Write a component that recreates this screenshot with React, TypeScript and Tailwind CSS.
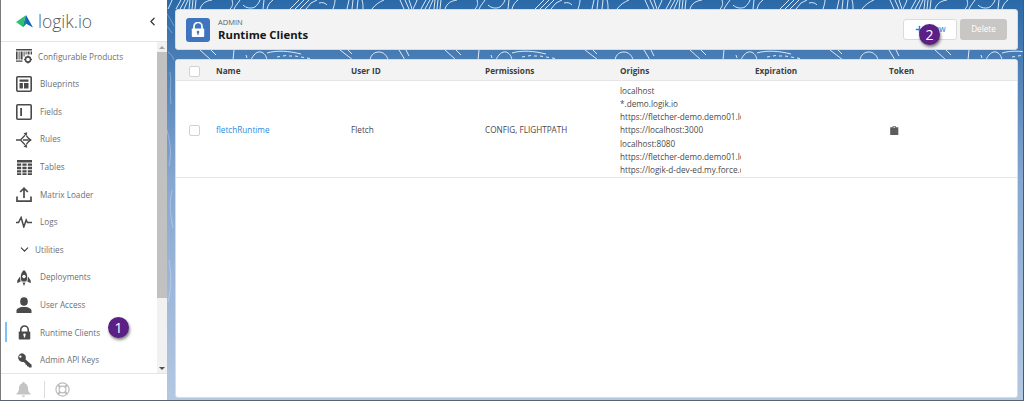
import { ChevronDown, ChevronLeft, Plus } from 'lucide-react';
import type { ReactNode } from 'react';

function ProductsIcon() {
  return (
    <svg viewBox="0 0 16 15" className="h-[15px] w-[16px]" fill="#4a4a4a">
      <path d="M0 0h16v1.4H0zM0 2.4h1.6v8H0zM2.6 2.4h1v8h-1zM4.6 2.4h2v8h-2zM7.6 2.4h1v5h-1zM9.6 2.4h1v3h-1zM11.6 2.4h2v3h-2zM14.6 2.4h1.4v3h-1.4zM0 11.4h6.5v1.4H0z" />
      <circle cx="12" cy="10.5" r="2.6" fill="none" stroke="#4a4a4a" strokeWidth="1.6" />
      <path d="M11.4 6.4h1.2v1.4h-1.2zM11.4 13.2h1.2v1.4h-1.2zM8 9.9h1.4v1.2H8zM14.6 9.9H16v1.2h-1.4z" />
    </svg>
  );
}

function BlueprintIcon() {
  return (
    <svg viewBox="0 0 16 16" className="h-4 w-4" fill="none">
      <rect x="0.8" y="0.8" width="14.4" height="14.4" rx="1" stroke="#4a4a4a" strokeWidth="1.6" />
      <path d="M3.5 3.5h9v2.2h-9zM3.5 7h3.4v5.5H3.5zM8 7h4.5v5.5H8z" fill="#4a4a4a" />
    </svg>
  );
}

function FieldsIcon() {
  return (
    <svg viewBox="0 0 16 16" className="h-4 w-4" fill="none">
      <rect x="0.8" y="0.8" width="14.4" height="14.4" rx="1" stroke="#4a4a4a" strokeWidth="1.6" />
      <path d="M4.2 4h1.8v8H4.2z" fill="#4a4a4a" />
    </svg>
  );
}

function RulesIcon() {
  return (
    <svg viewBox="0 0 16 16" className="h-4 w-4" fill="none" stroke="#4a4a4a" strokeWidth="1.3">
      <path d="M0 8h4.500M4.500 8 9 3.200M4.500 8 9 12.800M10.500 4 14 8l-3.500 4M7 8h5" />
      <path d="M7.500 1.300 11.200 0.300 10.600 4.200zM7.500 14.700l3.700 1-.6-3.900zM12.500 5.800 16 8l-3.500 2.200z" fill="#4a4a4a" stroke="none" />
    </svg>
  );
}

function TablesIcon() {
  return (
    <svg viewBox="0 0 15 15" className="h-[15px] w-[15px]" fill="#4a4a4a">
      <path d="M0 0h15v2.4H0zM0 3.4h4.2v2.4H0zM5.400 3.400h4.200v2.400H5.400zM10.800 3.400H15v2.400h-4.200zM0 6.800h4.200v2.400H0zM5.400 6.800h4.200v2.400H5.400zM10.800 6.800H15v2.400h-4.200zM0 10.200h4.200v2.200H0zM5.400 10.200h4.200v2.200H5.400zM10.800 10.200H15v2.200h-4.200zM0 13.300h4.200V15H0zM5.400 13.300h4.200V15H5.400zM10.800 13.300H15V15h-4.200z" />
    </svg>
  );
}

function UploadIcon() {
  return (
    <svg viewBox="0 0 16 15" className="h-[15px] w-4" fill="none" stroke="#4a4a4a" strokeWidth="1.7">
      <path d="M1 9.500v4.600h14V9.500M8 11V1.500M4.200 5 8 1.200 11.800 5" />
    </svg>
  );
}

function LogsIcon() {
  return (
    <svg viewBox="0 0 16 12" className="h-3 w-4" fill="none" stroke="#4a4a4a" strokeWidth="1.500">
      <path d="M0 6.500h2.500l2.600-5 2.700 9.500 2.400-7 1.200 2.500H16" />
    </svg>
  );
}

function RocketIcon() {
  return (
    <svg viewBox="0 0 14 16" className="h-4 w-[14px]" fill="#4a4a4a">
      <path d="M7 0c2.400 1.800 3.200 4.400 3.200 7 0 1.600-.3 3.200-.8 4.600H4.600C4.100 10.200 3.800 8.600 3.800 7c0-2.600.8-5.200 3.200-7z" />
      <circle cx="7" cy="6.500" r="1.700" fill="#fff" />
      <path d="M3 6.500.3 10.500v2.800l3.300-1.800zM11 6.500l2.700 4v2.800l-3.300-1.800zM5.600 12.400h2.800L7 16z" />
    </svg>
  );
}

function UserIcon() {
  return (
    <svg viewBox="0 0 16 16" className="h-4 w-4" fill="#4a4a4a">
      <ellipse cx="8" cy="4.500" rx="3.800" ry="4.300" />
      <path d="M.5 16v-2.500c0-2 3-3 4.800-3.600h5.400c1.800.6 4.800 1.600 4.800 3.600V16z" />
    </svg>
  );
}

function LockIcon({ color = '#4a4a4a', hole = '#fff', size = 'h-[15px] w-[13px]' }: { color?: string; hole?: string; size?: string }) {
  return (
    <svg viewBox="0 0 14 15" className={size}>
      <path d="M3 7V4.500a4 4 0 0 1 8 0V7" fill="none" stroke={color} strokeWidth="1.700" />
      <rect x="0.800" y="6.500" width="12.400" height="8.500" rx="0.800" fill={color} />
      <circle cx="7" cy="10" r="1.300" fill={hole} />
      <path d="M6.300 10.500h1.400v2.300H6.300z" fill={hole} />
    </svg>
  );
}

function KeyIcon() {
  return (
    <svg viewBox="0 0 15 15" className="h-[15px] w-[15px]" fill="#4a4a4a">
      <path d="M4.600.2a4.400 4.400 0 0 1 4 6.200l6 5.400v2.700h-2.400l-.8-1-1.300-.2-.2-1.400-1.400-.3-.2-1.300-1.700-1.400A4.400 4.400 0 1 1 4.600.2zM3.400 2.400a1.200 1.200 0 1 0 0 2.400 1.200 1.200 0 0 0 0-2.400z" />
    </svg>
  );
}

function ClipboardIcon() {
  return (
    <svg viewBox="0 0 9 10" className="h-[9px] w-[8.500px]" fill="#5c5c5c">
      <path d="M0 1.300h2.600V.3h3.800v1H9V10H0z" />
      <path d="M3.500 1h2v1h-2z" fill="#ddd" />
    </svg>
  );
}

function BuoyIcon() {
  return (
    <svg viewBox="0 0 16 16" className="h-[15px] w-[15px]" fill="none" stroke="#bdbdbd">
      <circle cx="8" cy="8" r="7" strokeWidth="1.300" />
      <circle cx="8" cy="8" r="3.600" strokeWidth="1.300" />
      <path d="M3 3l2.500 2.500M13 3l-2.500 2.500M3 13l2.500-2.500M13 13l-2.500-2.500" strokeWidth="2.400" />
    </svg>
  );
}

function Logo() {
  return (
    <svg viewBox="0 0 17 12.500" className="h-[12.500px] w-[17px]">
      <path d="M0 7 9.500.5 7 12z" fill="#2fc06f" />
      <path d="M7 12 10 0l7 12.500-6.800-3.700z" fill="#1565c0" />
      <path d="M8.500 5.500 10 0l.2 8.800L7 12z" fill="#0f8f7a" />
    </svg>
  );
}

function Contours() {
  // topographic texture, the tile repeats every 245px across the blue strips
  return (
    <svg className="absolute inset-0 h-full w-full" fill="none">
      <defs>
        <pattern id="topo" width="245" height="62" patternUnits="userSpaceOnUse">
          <g stroke="#eef4fb" strokeOpacity="0.9" strokeWidth="1">
            <path d="M1 9C3 5 4 3 5 0M9 9l5-9M13 9l5-9M17 9l4-9M22 9l1-9M25 9l1-9M28 9l1-9M33 9c2-6 6-8 12-9M63 9c3-3 3-6 2-9M67 9c2-4 4-6 6-9M76 5c3 3 8 4 12 2 2-2 4-4 5-7M96 9l1-9M100 9c1-4 3-7 6-9M123 9l9-9M128 9l9-9M133 9l9-9M139 9l5-6 6-3M152 3c4-1 6 0 8 2M166 9c1-3 2-6 2-9M180 9l2-9M185 9l1-9M190 9l1-9M196 9c0-3 0-6-1-9M205 9c3-4 7-7 12-9M233 0l4 9M238 0l4 9M242 0l3 9" />
            <path d="M33 50l11 10M44 50l5 5M67 50l-1 10M79 55l1 3M84 60c2-5 6-9 10-8 3 1 5 3 6 8" />
            <path d="M100 53c10-3 22-2 34 1M110 57l3-.5M116 56l3-.5M122 56l3 0M128 56l3 .5M134 57l3 .5M140 58l3 .5" />
            <path d="M173 50l13 10M181 50l4 4M203 60c1-6 5-8 9-8s8 3 9 8M232 50l6 10M239 50l3 6" />
          </g>
        </pattern>
      </defs>
      <rect x="0" y="0" width="100%" height="62" fill="url(#topo)" />
      <path d="M0 14c3 4 5 8 7 12M0 26l5 7M1 52c3 2 5 5 6 8M3 72c2 10-1 20 1 32M0 130c3 12 5 22 2 36M5 190c-3 12-2 24 1 38M2 260c2 14 3 26-1 42" stroke="#eef4fb" strokeOpacity="0.4" strokeWidth="0.8" />
    </svg>
  );
}

function NavItem({ icon, label, active, textClass = 'ml-[8px]', pad = 'pl-[15px]' }: { icon: ReactNode; label: string; active?: boolean; textClass?: string; pad?: string }) {
  return (
    <div className={`relative flex h-[27.6px] items-center ${pad}`}>
      {active && <div className="absolute left-[4px] top-[3px] h-[20px] w-[2px] bg-[#7cc0f8]" />}
      <div className="flex w-[16px] justify-center">{icon}</div>
      <span className={`${textClass} text-[8.200px] text-[#6b6f76]`}>{label}</span>
    </div>
  );
}

function Badge({ n, className }: { n: string; className: string }) {
  return (
    <div className={`absolute flex h-[21px] w-[21px] items-center justify-center rounded-full bg-[#5b1f85] text-[14px] text-white shadow-[1px_2px_3px_rgba(0,0,0,0.5)] ${className}`}>
      {n}
    </div>
  );
}

const origins = [
  'localhost',
  '*.demo.logik.io',
  'https://fletcher-demo.demo01.logik.io',
  'https://localhost:3000',
  'localhost:8080',
  'https://fletcher-demo.demo01.logik.io',
  'https://logik-d-dev-ed.my.force.com',
];

const headCell = 'text-[8.200px] font-bold text-[#3e3e3c]';

export default function App() {
  return (
    <div className="relative flex h-[401px] w-[1024px] overflow-hidden bg-white font-['Open_Sans',sans-serif]">
      {/* Sidebar */}
      <aside className="flex h-full w-[167px] shrink-0 flex-col border-l border-[#7a7a7a] bg-white">
        <div className="flex h-[42px] items-center justify-between border-b border-[#e5e5e5] pl-[15px] pr-[8px] pt-[2px]">
          <div className="flex items-center gap-[5px]">
            <Logo />
            <span className="text-[17.500px] font-light leading-none text-[#55595e]">logik.io</span>
          </div>
          <ChevronLeft className="h-[13px] w-[13px] text-[#333]" strokeWidth={2.200} />
        </div>
        <div className="flex min-h-0 flex-1">
          <nav className="min-w-0 flex-1 pt-[1px]">
            <NavItem icon={<ProductsIcon />} label="Configurable Products" textClass="ml-[6px]" />
            <NavItem icon={<BlueprintIcon />} label="Blueprints" />
            <NavItem icon={<FieldsIcon />} label="Fields" />
            <NavItem icon={<RulesIcon />} label="Rules" />
            <NavItem icon={<TablesIcon />} label="Tables" />
            <NavItem icon={<UploadIcon />} label="Matrix Loader" />
            <NavItem icon={<LogsIcon />} label="Logs" />
            <NavItem icon={<ChevronDown className="h-[13px] w-[13px] text-[#333]" strokeWidth={1.900} />} label="Utilities" textClass="ml-[3px]" />
            <NavItem icon={<RocketIcon />} label="Deployments" />
            <NavItem icon={<UserIcon />} label="User Access" />
            <NavItem icon={<LockIcon />} label="Runtime Clients" active />
            <NavItem icon={<KeyIcon />} label="Admin API Keys" />
          </nav>
          {/* scrollbar */}
          <div className="flex w-[10px] shrink-0 flex-col bg-[#f1f1f1]">
            <div className="flex h-[10px] items-center justify-center">
              <div className="h-0 w-0 border-x-[3px] border-b-[3px] border-x-transparent border-b-[#a3a3a3]" />
            </div>
            <div className="h-[246px] bg-[#c1c1c1]" />
            <div className="flex-1" />
            <div className="flex h-[10px] items-center justify-center">
              <div className="h-0 w-0 border-x-[3px] border-t-[3px] border-x-transparent border-t-[#505050]" />
            </div>
          </div>
        </div>
        <div className="flex h-[28px] items-center border-t border-[#e5e5e5] pl-[15px] pt-[3px]">
          <svg viewBox="0 0 15 15" className="h-[15px] w-[15px]" fill="#c4c4c4">
            <path d="M7.500 0a1.200 1.200 0 0 1 1.200 1.200C11 1.800 12 4 12 6.500c0 2.500 1 3.800 2.500 5.200v.8h-14v-.8C2 10.300 3 9 3 6.500 3 4 4 1.800 6.300 1.200A1.200 1.200 0 0 1 7.500 0zM6 13.500h3a1.500 1.500 0 0 1-3 0z" />
          </svg>
          <div className="ml-[13px] h-[17px] w-px bg-[#dcdcdc]" />
          <div className="ml-[10px]"><BuoyIcon /></div>
        </div>
      </aside>

      {/* Main */}
      <main className="relative flex min-w-0 flex-1 flex-col bg-gradient-to-b from-[#2a69a8] via-[#86a7d0] via-[45%] to-[#b4c8e2] pb-[3px] pl-[8px] pr-[6px] pt-[9px]">
        <Contours />
        <header className="relative flex h-[41px] items-center justify-between rounded-[3px] border border-[#dddbda] bg-[#f3f3f3] pl-[10px] pr-[10px]">
          <div className="flex items-center gap-[8px]">
            <div className="flex h-[24px] w-[24px] items-center justify-center rounded-[3px] bg-[#3f74c0]">
              <LockIcon color="#fff" hole="#3f74c0" size="h-[15px] w-[14px]" />
            </div>
            <div className="flex flex-col">
              <span className="text-[7.500px] leading-[9px] text-[#5c5c5c]">ADMIN</span>
              <span className="text-[11.300px] font-bold leading-[15px] text-[#16161a]">Runtime Clients</span>
            </div>
          </div>
          <div className="flex items-center gap-[3px]">
            <button className="flex h-[21px] w-[54px] items-center justify-center gap-[3px] rounded-[3px] border border-[#dddbda] bg-white text-[8.200px] text-[#1b76d2]">
              <Plus className="h-[11px] w-[11px] text-[#2a7fd6]" strokeWidth={2.800} />
              New
            </button>
            <button className="h-[21px] w-[47px] rounded-[3px] bg-[#c9c7c5] text-[8.200px] text-white">Delete</button>
          </div>
        </header>

        <section className="relative mt-[9px] min-h-0 flex-1 rounded-[3px] border border-[#dddbda] bg-white">
          <div className="flex h-[21px] items-center border-b border-[#e6e6e6] bg-[#f3f3f3] pt-[2px]">
            <div className="flex w-[37px] justify-center">
              <div className="h-[11px] w-[11px] rounded-[2px] border border-[#d4d2d0] bg-white" />
            </div>
            <div className={`w-[135px] pl-[3px] ${headCell}`}>Name</div>
            <div className={`w-[134px] pl-[3px] ${headCell}`}>User ID</div>
            <div className={`w-[135px] pl-[3px] ${headCell}`}>Permissions</div>
            <div className={`w-[135px] pl-[3px] ${headCell}`}>Origins</div>
            <div className={`w-[134px] pl-[3px] ${headCell}`}>Expiration</div>
            <div className={`pl-[3px] ${headCell}`}>Token</div>
          </div>
          <div className="flex h-[97px] items-center border-b border-[#e6e6e6] pt-[2px] text-[8.200px] text-[#4a4a4a]">
            <div className="flex w-[37px] justify-center">
              <div className="h-[11px] w-[11px] rounded-[2px] border border-[#d4d2d0] bg-white" />
            </div>
            <div className="w-[135px] pl-[3px] text-[#2f8ae0]">fletchRuntime</div>
            <div className="w-[134px] pl-[3px]">Fletch</div>
            <div className="w-[135px] pl-[3px]">CONFIG, FLIGHTPATH</div>
            <div className="mr-[11px] w-[124px] overflow-hidden pl-[3px] leading-[13.100px]">
              {origins.map((o, i) => (
                <div key={i} className="whitespace-nowrap">{o}</div>
              ))}
            </div>
            <div className="w-[134px]" />
            <div className="pl-[4px]"><ClipboardIcon /></div>
          </div>
        </section>
      </main>

      {/* window edges from the capture */}
      <div className="absolute right-0 top-0 h-full w-px bg-[#4a5a6a]" />
      <div className="absolute bottom-0 left-0 h-px w-full bg-[#5a6470]" />

      <Badge n="1" className="left-[108px] top-[317px]" />
      <Badge n="2" className="left-[919px] top-[24px]" />
    </div>
  );
}
